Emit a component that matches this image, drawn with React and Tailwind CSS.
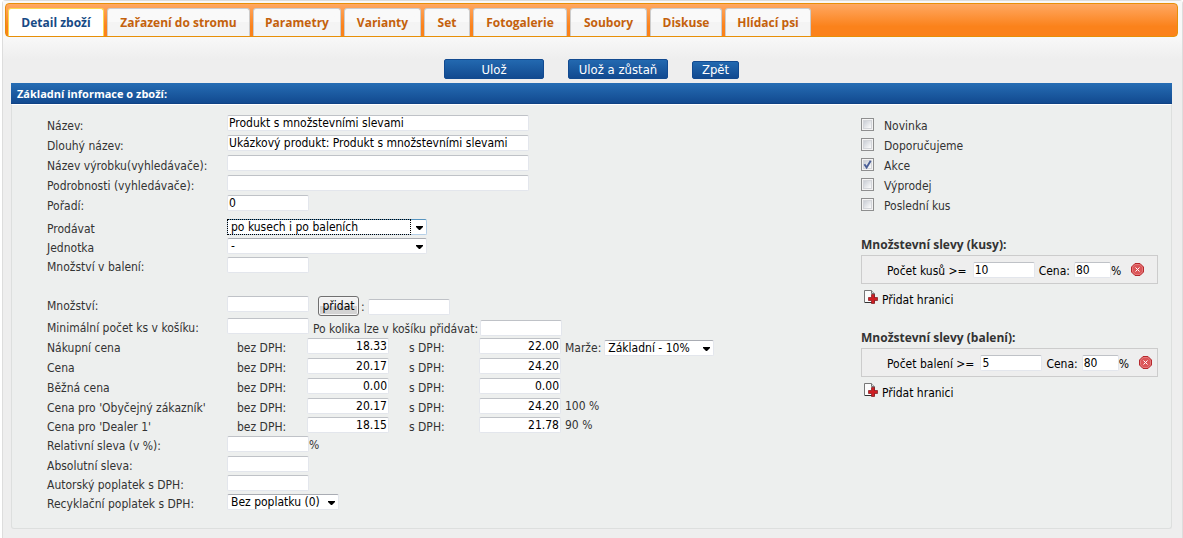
import React, { useId, useState } from 'react';

const INPUT =
  'h-4 rounded-[2px] border border-[#e3e6ec] border-t-[#bfc2c7] bg-white px-px text-xs leading-[14px] text-black outline-none';

function Tab({ active, width, children }) {
  return (
    <button
      type="button"
      role="tab"
      aria-selected={active}
      className={
        'h-full shrink-0 whitespace-nowrap rounded-t-[3px] border border-b-0 pt-px text-center font-[Open_Sans,sans-serif] text-xs font-bold ' +
        (active
          ? 'border-[#fbd850] bg-white text-[#174a85] '
          : 'border-[#cccccc] border-b border-b-[#e78f08] bg-linear-to-b from-[#f9f9f9] from-50% to-[#f4f4f4] to-50% text-[#c4610c] ') +
        width
      }
    >
      {children}
    </button>
  );
}

function Action({ className, children }) {
  return (
    <button
      type="button"
      className={
        'rounded-[2px] border border-[#124a90] bg-linear-to-b from-[#2369b0] to-[#124a90] text-[13px] leading-4 text-white ' +
        className
      }
    >
      {children}
    </button>
  );
}

function Select({ id, label, options, width, focused }) {
  return (
    <span className={'relative inline-flex h-4 ' + width}>
      <select
        id={id}
        aria-label={label}
        className={
          'h-4 w-full appearance-none rounded-[2px] border bg-white pl-[3px] pr-4 text-xs leading-[14px] text-black outline-none ' +
          (focused ? 'border-[#b5cfe7] border-t-[#5794bf]' : 'border-[#e3e6ec] border-t-[#a9acb3]')
        }
      >
        {options.map((o) => (
          <option key={o}>{o}</option>
        ))}
      </select>
      {focused && (
        <span className="pointer-events-none absolute inset-y-0 left-0 right-4 border border-dotted border-black" />
      )}
      <svg className="pointer-events-none absolute right-1 top-[7px]" width="7" height="4" viewBox="0 0 7 4">
        <path d="M0 0h7v1L4 4H3L0 1z" fill="#000" />
      </svg>
    </span>
  );
}

function Row({ label, htmlFor, short, low, children }) {
  return (
    <div className={'flex items-start ' + (short ? 'h-[19px]' : 'h-5')}>
      <label
        htmlFor={htmlFor}
        className={'w-[180px] shrink-0 whitespace-nowrap ' + (low ? 'leading-[22px]' : 'leading-5')}
      >
        {label}
      </label>
      {children}
    </div>
  );
}

function TextRow({ label, value = '', width = 'w-[82px]', short, low, suffix }) {
  const id = useId();
  return (
    <Row label={label} htmlFor={id} short={short} low={low}>
      <input id={id} type="text" defaultValue={value} className={INPUT + ' ' + width} />
      {suffix && <span className="leading-[18px]">{suffix}</span>}
    </Row>
  );
}

function PriceRow({ label, net, gross, short, children }) {
  const id = useId();
  return (
    <Row label={label} htmlFor={id + 'n'} short={short}>
      <label htmlFor={id + 'n'} className="w-20 shrink-0 pl-[10px] leading-5">
        bez DPH:
      </label>
      <input id={id + 'n'} type="text" defaultValue={net} className={INPUT + ' w-[82px] text-right'} />
      <label htmlFor={id + 'g'} className="w-[90px] shrink-0 pl-5 leading-5">
        s DPH:
      </label>
      <input id={id + 'g'} type="text" defaultValue={gross} className={INPUT + ' w-[82px] text-right'} />
      <span className="flex items-start gap-[3px] whitespace-nowrap pl-1">{children}</span>
    </Row>
  );
}

function Check({ label, initial = false }) {
  const [on, setOn] = useState(initial);
  return (
    <label className="flex h-5 items-start gap-[10px]">
      <span className="relative mt-[3px] flex size-[13px]">
        <input
          type="checkbox"
          checked={on}
          onChange={(e) => setOn(e.target.checked)}
          className="size-[13px] appearance-none border border-[#8e8f8f] bg-linear-to-br from-[#cbcfd6] from-20% to-[#fbfbfb] to-80% shadow-[inset_0_0_0_1px_#f4f4f4,inset_0_0_0_2px_#d3d5d9]"
        />
        {on && (
          <svg className="pointer-events-none absolute inset-0" width="13" height="13" viewBox="0 0 13 13">
            <path d="M3.4 6.2l2.2 3.3L9.7 2.8" fill="none" stroke="#4a5f97" strokeWidth="1.9" />
          </svg>
        )}
      </span>
      <span className="leading-[22px]">{label}</span>
    </label>
  );
}

function DeleteIcon() {
  return (
    <svg width="13" height="13" viewBox="0 0 13 13">
      <path d="M4 .5h5L12.500 4v5L9 12.500H4L.5 9V4z" fill="#dc5558" stroke="#b5282d" />
      <path d="M4.300 1.500h4.400l2.800 2.800v4.400l-2.800 2.800H4.300L1.500 8.700V4.300z" fill="none" stroke="#e47a7b" />
      <path d="M4.500 4.500l4 4M8.500 4.500l-4 4" stroke="#fff" strokeWidth="1" />
    </svg>
  );
}

function AddIcon() {
  return (
    <svg width="14" height="14" viewBox="0 0 14 14">
      <path d="M.5.500h7l3 3v9H.5z" fill="#fcfcfc" stroke="#777" />
      <path d="M7.500.500v3h3" fill="#ddd" stroke="#777" />
      <path d="M1 12.500h9" stroke="#333" />
      <path d="M7.500 4.500h3v3h3v3h-3v3h-3v-3h-3v-3h3z" fill="#cf1d22" stroke="#7d1519" strokeWidth=".7" />
    </svg>
  );
}

function Discount({ title, label, amount, price }) {
  const id = useId();
  return (
    <section>
      <h2 className="font-[Open_Sans,sans-serif] text-xs font-bold leading-5">{title}</h2>
      <div className="flex h-[29px] items-center border border-[#cccccc] bg-[#eeeeee] pl-[25px] text-black">
        <label htmlFor={id + 'a'} className="pr-[6px] pt-[2px]">
          {label}
        </label>
        <input id={id + 'a'} type="text" defaultValue={amount} className={INPUT + ' w-[62px]'} />
        <label htmlFor={id + 'p'} className="px-1 pt-[2px]">
          Cena:
        </label>
        <input id={id + 'p'} type="text" defaultValue={price} className={INPUT + ' w-[37px]'} />
        <span className="pt-[2px]">%</span>
        <button type="button" aria-label="Smazat" className="pl-[10px]">
          <DeleteIcon />
        </button>
      </div>
      <button type="button" className="mt-[6px] flex items-start gap-1 pl-[3px] text-black">
        <AddIcon />
        <span className="pt-[2px] leading-4">Přidat hranici</span>
      </button>
    </section>
  );
}

export default function App() {
  const id = useId();
  return (
    <div className="flex min-h-screen flex-col bg-white pl-[2px] font-['DejaVu_Sans_Condensed','Noto_Sans',sans-serif] text-xs text-[#333333]">
      <main className="grow rounded-t-[4px] border border-b-0 border-[#dddddd] bg-[#eeeeee]">
        <div className="bg-[linear-gradient(#f8f8f8_37px,#eeeeee_58px)] pl-[2px] pr-1 pt-[2px]">
          <div
            role="tablist"
            className="flex h-[34px] gap-[3px] rounded-[4px] border border-[#e78f08] bg-[linear-gradient(#ffa862,#fb821b_70%)] pl-[2px] pt-1"
          >
            <Tab active width="w-24">Detail zboží</Tab>
            <Tab width="w-[143px]">Zařazení do stromu</Tab>
            <Tab width="w-[88px]">Parametry</Tab>
            <Tab width="w-[77px]">Varianty</Tab>
            <Tab width="w-[46px]">Set</Tab>
            <Tab width="w-[94px]">Fotogalerie</Tab>
            <Tab width="w-[77px]">Soubory</Tab>
            <Tab width="w-[72px]">Diskuse</Tab>
            <Tab width="w-[86px]">Hlídací psi</Tab>
          </div>
          <div className="flex h-[46px] items-end justify-center gap-6 pb-1">
            <Action className="h-5 w-[100px] pt-px">Ulož</Action>
            <Action className="h-5 w-[100px] pt-px">Ulož a zůstaň</Action>
            <Action className="h-[18px] w-[47px]">Zpět</Action>
          </div>
        </div>

        <div className="pl-2 pr-[10px]">
          <h1 className="h-[21px] border-b border-[#0f4284] bg-linear-to-b from-[#266db4] to-[#124a90] pl-[6px] font-[Open_Sans,sans-serif] text-[11px] font-bold leading-[21px] text-white">
            Základní informace o zboží:
          </h1>
          <form
            onSubmit={(e) => e.preventDefault()}
            className="flex justify-between rounded-b-[3px] border border-t-white border-[#dddfde] bg-[#edefee] pb-[15px] pl-[35px] pr-[13px] pt-[10px]"
          >
            <div className="min-w-0">
              <TextRow low label="Název:" value="Produkt s množstevními slevami" width="w-[302px]" />
              <TextRow low label="Dlouhý název:" value="Ukázkový produkt: Produkt s množstevními slevami" width="w-[302px]" />
              <TextRow low label="Název výrobku(vyhledávače):" width="w-[302px]" />
              <TextRow low label="Podrobnosti (vyhledávače):" width="w-[302px]" />
              <TextRow low label="Pořadí:" value="0" />
              <div className="pt-1">
                <Row label="Prodávat" htmlFor={id + 'sell'} short>
                  <Select id={id + 'sell'} width="w-[200px]" focused options={['po kusech i po baleních', 'po kusech', 'po baleních']} />
                </Row>
                <Row label="Jednotka" htmlFor={id + 'unit'} short>
                  <Select id={id + 'unit'} width="w-[200px]" options={['-', 'ks', 'kg']} />
                </Row>
                <TextRow label="Množství v balení:" short />
              </div>
              <div className="pt-5">
                <Row label="Množství:" htmlFor={id + 'qty'}>
                  <input id={id + 'qty'} type="text" className={INPUT + ' w-[82px]'} />
                  <button
                    type="button"
                    className="ml-[9px] h-5 w-[41px] rounded-[3px] border border-[#707070] bg-linear-to-b from-[#f2f2f2] from-50% to-[#d3d3d3] to-50% leading-[18px] text-black shadow-[inset_0_0_0_1px_#f6f6f6]"
                  >
                    přidat
                  </button>
                  <label htmlFor={id + 'add'} className="w-[9px] pl-[2px] leading-[22px]">
                    :
                  </label>
                  <input id={id + 'add'} type="text" className={INPUT + ' mt-[3px] w-[82px]'} />
                </Row>
              </div>
              <div className="pt-[2px]">
                <Row label="Minimální počet ks v košíku:" htmlFor={id + 'min'}>
                  <input id={id + 'min'} type="text" className={INPUT + ' w-[82px]'} />
                  <label htmlFor={id + 'step'} className="w-[171px] whitespace-nowrap pl-1 leading-[22px]">
                    Po kolika lze v košíku přidávat:
                  </label>
                  <input id={id + 'step'} type="text" className={INPUT + ' mt-[2px] w-[82px]'} />
                </Row>
              </div>
              <PriceRow label="Nákupní cena" net="18.33" gross="22.00">
                <label htmlFor={id + 'margin'} className="leading-5">
                  Marže:
                </label>
                <span className="flex pt-[2px]">
                  <Select id={id + 'margin'} width="w-[110px]" options={['Základní - 10%']} />
                </span>
              </PriceRow>
              <PriceRow label="Cena" net="20.17" gross="24.20" />
              <PriceRow label="Běžná cena" net="0.00" gross="0.00" />
              <PriceRow label="Cena pro 'Obyčejný zákazník'" net="20.17" gross="24.20" short>
                <span className="leading-4">100 %</span>
              </PriceRow>
              <PriceRow label="Cena pro 'Dealer 1'" net="18.15" gross="21.78" short>
                <span className="leading-4">90 %</span>
              </PriceRow>
              <TextRow label="Relativní sleva (v %):" suffix="%" />
              <TextRow label="Absolutní sleva:" short />
              <TextRow label="Autorský poplatek s DPH:" short />
              <Row label="Recyklační poplatek s DPH:" htmlFor={id + 'rec'} short>
                <Select id={id + 'rec'} width="w-28" options={['Bez poplatku (0)']} />
              </Row>
            </div>

            <div className="w-[297px] shrink-0">
              <Check label="Novinka" />
              <Check label="Doporučujeme" />
              <Check label="Akce" initial />
              <Check label="Výprodej" />
              <Check label="Poslední kus" />
              <div className="flex flex-col gap-5 pt-5">
                <Discount title="Množstevní slevy (kusy):" label="Počet kusů >=" amount="10" price="80" />
                <Discount title="Množstevní slevy (balení):" label="Počet balení >=" amount="5" price="80" />
              </div>
            </div>
          </form>
        </div>
      </main>
    </div>
  );
}
